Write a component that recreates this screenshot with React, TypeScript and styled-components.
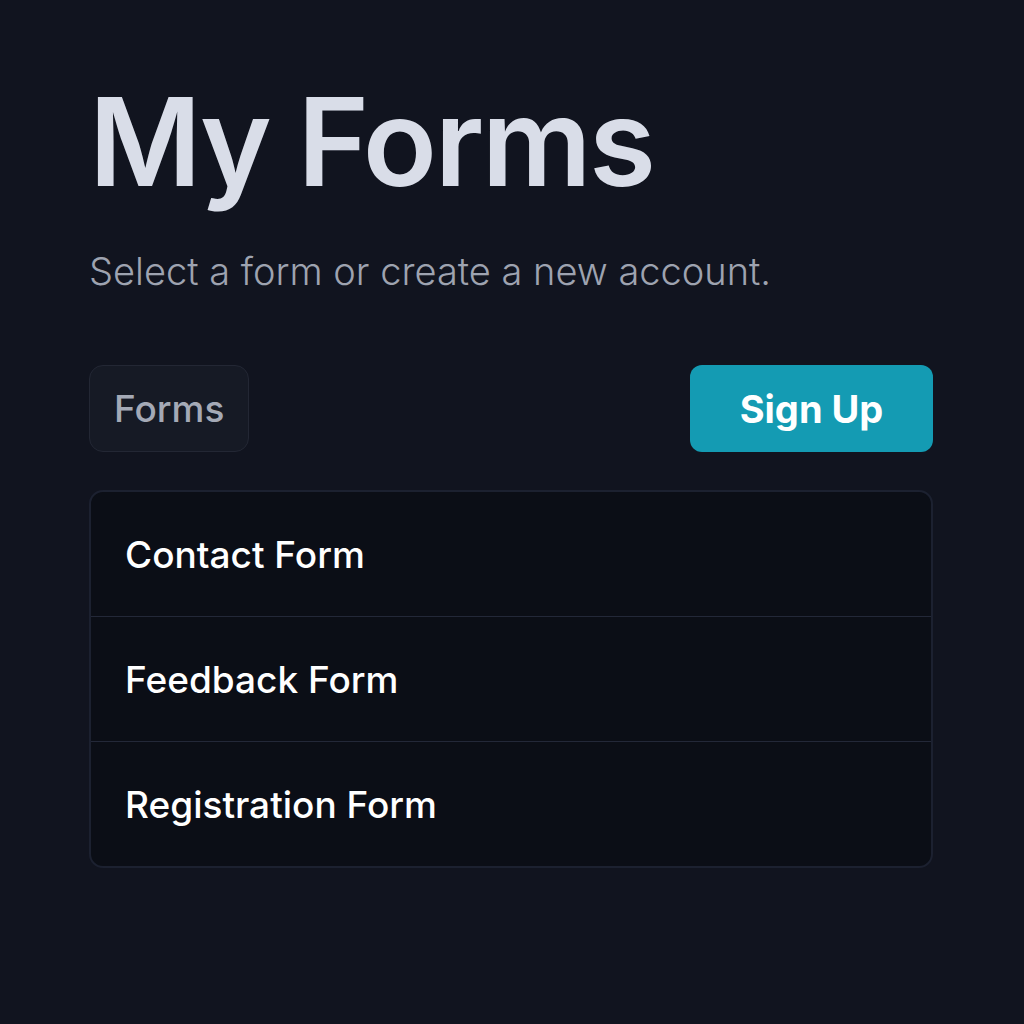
import React from 'react'
import styled, { createGlobalStyle } from 'styled-components'

const forms: string[] = ['Contact Form', 'Feedback Form', 'Registration Form']

const GlobalStyle = createGlobalStyle`
	html, body {
		margin: 0;
		padding: 0;
		background: #11141f;
	}
	body {
		font-family: Inter, 'Noto Sans', sans-serif;
		-webkit-font-smoothing: antialiased;
	}
`

function App () {
	return (
		<>
			<GlobalStyle />
			<Page>
				<Title>My Forms</Title>
				<Subtitle>Select a form or create a new account.</Subtitle>
				<Toolbar>
					<TabChip>Forms</TabChip>
					<SignUpButton>Sign Up</SignUpButton>
				</Toolbar>
				<FormList>
					{forms.map((name: string) => (
						<FormRow key={name}>{name}</FormRow>
					))}
				</FormList>
			</Page>
		</>
	)
}

const Page = styled.main`
	width: 844px;
	padding: 72px 0 0 89px;
	display: flex;
	flex-direction: column;
`
const Title = styled.h1`
	margin: 0;
	font-size: 122px;
	line-height: 140px;
	font-weight: 600;
	letter-spacing: -2.5px;
	color: #d9dde8;
`
const Subtitle = styled.p`
	margin: 36px 0 0;
	font-size: 38px;
	line-height: 46px;
	font-weight: 300;
	color: #9ea3b0;
`
const Toolbar = styled.div`
	margin-top: 71px;
	display: flex;
	align-items: center;
	justify-content: space-between;
`
const TabChip = styled.div`
	height: 87px;
	padding: 0 24px;
	box-sizing: border-box;
	display: flex;
	align-items: center;
	border: 1px solid #232734;
	border-radius: 14px;
	background: #161a25;
	font-size: 37px;
	font-weight: 500;
	color: #a4a9b6;
`
const SignUpButton = styled.button`
	width: 243px;
	height: 87px;
	border: none;
	border-radius: 12px;
	background: #149bb3;
	font-family: inherit;
	font-size: 38px;
	font-weight: 700;
	color: #ffffff;
	cursor: pointer;
`
const FormList = styled.div`
	margin-top: 38px;
	display: flex;
	flex-direction: column;
	background: #0b0e16;
	border: 2px solid #1c2130;
	border-radius: 14px;
	overflow: hidden;
`
const FormRow = styled.div`
	height: 124px;
	padding: 0 34px;
	display: flex;
	align-items: center;
	font-size: 37px;
	font-weight: 500;
	color: #ffffff;
	& + & {
		border-top: 1px solid #232838;
	}
`

export default App
